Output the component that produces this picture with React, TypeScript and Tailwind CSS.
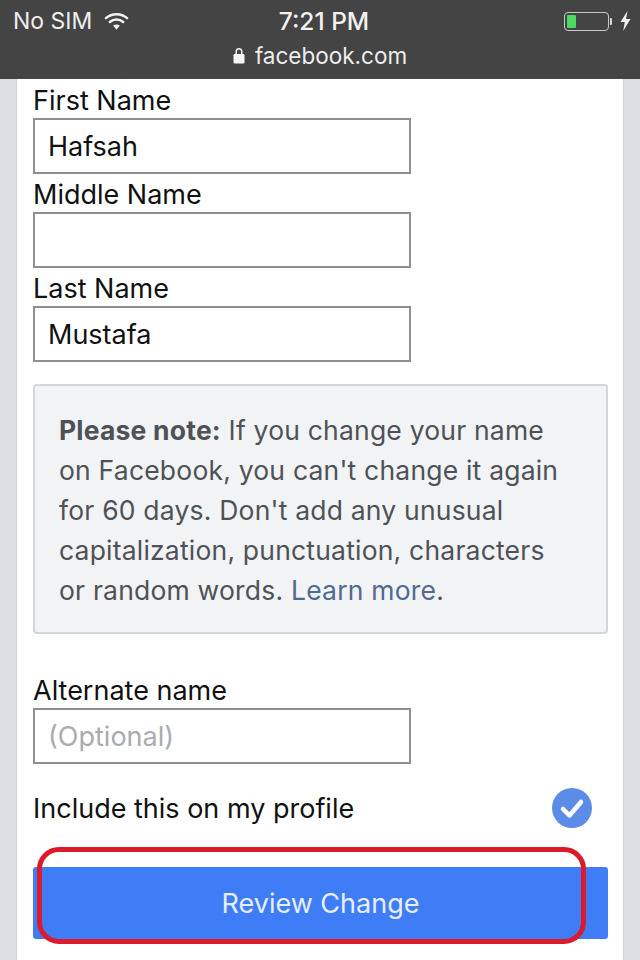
import React from "react";

function Field({ label, value, placeholder }: { label: string; value?: string; placeholder?: string }) {
  return (
    <div className="flex flex-col">
      <div className="h-[38px] pt-[5px] text-[27px] leading-[32px] text-[#111]">{label}</div>
      <div className="flex h-[56px] w-[378px] items-center border-2 border-[#8f8f8f] bg-white pl-[13px] pt-[2px] text-[27px] leading-[32px]">
        {value ? <span className="text-[#111]">{value}</span> : <span className="text-[#a9abb0]">{placeholder}</span>}
      </div>
    </div>
  );
}

export default function App() {
  return (
    <div className="relative flex h-[960px] w-[640px] flex-col overflow-hidden bg-[#dcdee4] font-['Inter','Roboto',sans-serif]">
      <header className="flex h-[79px] shrink-0 flex-col bg-[#444444] px-[13px] text-white">
        <div className="flex h-[42px] items-center justify-between">
          <div className="flex w-[200px] items-center gap-[12px]">
            <span className="text-[23px] leading-[28px] text-[#eeeeee]">No SIM</span>
            <svg width="25" height="20" viewBox="0 0 26 20" fill="none" stroke="#f2f2f2" strokeLinecap="round">
              <path d="M2 7 C8 1.5 18 1.5 24 7" strokeWidth="2.6" />
              <path d="M6 11 C10 7.5 16 7.5 20 11" strokeWidth="2.6" />
              <path d="M13 19 L9.5 14.8 C11.5 13.2 14.5 13.2 16.5 14.8 Z" fill="#f2f2f2" stroke="none" />
            </svg>
          </div>
          <span className="ml-[8px] text-[24.5px] font-medium leading-[28px] text-[#f2f2f2]">7:21 PM</span>
          <div className="flex w-[200px] items-center justify-end">
            <div className="flex h-[19px] w-[45px] items-center rounded-[4px] border border-[#c8c8c8] p-[2px]">
              <div className="h-full w-[9px] rounded-[1px] bg-[#4cd964]" />
            </div>
            <div className="ml-[1px] h-[7px] w-[2px] rounded-r-[1px] bg-[#d8d8d8]" />
            <svg width="11" height="20" viewBox="0 0 11 20" fill="#f2f2f2" className="ml-[8px] -mr-[4px]">
              <path d="M7.5 0 L0.5 11 H4.8 L3.2 20 L10.5 8 H6 Z" />
            </svg>
          </div>
        </div>
        <div className="flex h-[27px] items-center justify-center gap-[10px]">
          <svg width="12" height="17" viewBox="0 0 12 17" fill="#f5f5f5">
            <path d="M2.5 7 V4.5 A3.5 3.5 0 0 1 9.5 4.5 V7 H8 V4.5 A2 2 0 0 0 4 4.5 V7 Z" />
            <rect x="0.5" y="7" width="11" height="9.5" rx="1.2" />
          </svg>
          <span className="text-[22.5px] leading-[28px] text-[#eeeeee]">facebook.com</span>
        </div>
      </header>

      <main className="ml-[16px] flex w-[608px] flex-1 flex-col border-x border-[#d0d2d8] bg-white pl-[16px]">
        <div className="pt-[1px]">
          <Field label="First Name" value="Hafsah" />
          <Field label="Middle Name" />
          <Field label="Last Name" value="Mustafa" />
        </div>

        <div className="mt-[22px] h-[250px] w-[575px] rounded-[4px] border-2 border-[#d3d6db] bg-[#f2f3f5] pl-[24px] pr-[30px] pt-[24px] text-[26.5px] leading-[40px] tracking-[0.2px] text-[#4e5257]">
          <b className="font-bold">Please note:</b> If you change your name on Facebook, you can't change it again for 60 days. Don't add any unusual capitalization, punctuation, characters or random words.{" "}
          <span className="text-[#4f6a90]">Learn more</span>.
        </div>

        <div className="mt-[36px]">
          <Field label="Alternate name" placeholder="(Optional)" />
        </div>

        <div className="mt-[24px] flex h-[40px] w-[559px] items-center justify-between">
          <span className="pt-[2px] text-[27px] leading-[32px] text-[#111]">Include this on my profile</span>
          <svg width="40" height="40" viewBox="0 0 40 40">
            <circle cx="20" cy="20" r="20" fill="#5b8de8" />
            <path d="M11 21 L17.5 27.5 L29 14" fill="none" stroke="#fff" strokeWidth="4.5" strokeLinecap="round" strokeLinejoin="round" />
          </svg>
        </div>

        <button className="mt-[39px] flex h-[72px] w-[575px] items-center justify-center rounded-[3px] bg-[#3f7df6] pt-[3px] text-[27px] text-[#e6eeff]">
          Review Change
        </button>
      </main>

      <div className="absolute left-[37px] top-[847px] h-[97px] w-[549px] rounded-[22px] border-[5px] border-[#dc1a2c]" />
    </div>
  );
}
